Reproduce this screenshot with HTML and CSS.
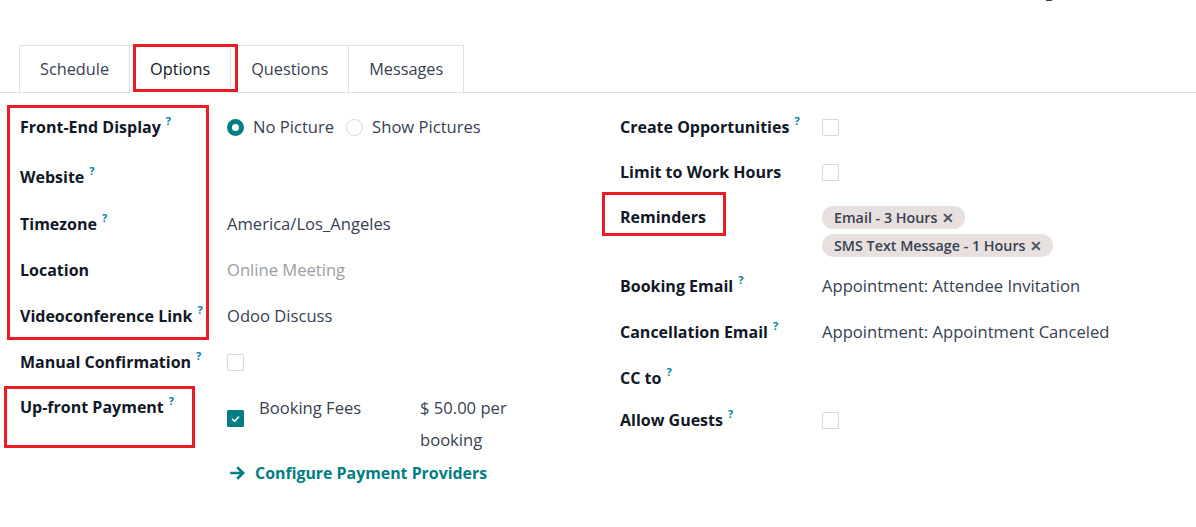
FILE: index.html
```html
<!DOCTYPE html>
<html>
<head>
<meta charset="utf-8">
<link rel="stylesheet" href="styles.css">
</head>
<body>
<div class="page">
  <div class="tabs">
    <div class="tab">Schedule</div>
    <div class="tab active">Options</div>
    <div class="tab">Questions</div>
    <div class="tab">Messages</div>
  </div>

  <div class="form">
    <div class="col">
      <div class="row r-display">
        <div class="label">Front-End Display<sup class="q">?</sup></div>
        <div class="value radios">
          <span class="radio on"></span><span class="rlabel">No Picture</span>
          <span class="radio"></span><span class="rlabel">Show Pictures</span>
        </div>
      </div>
      <div class="row r-website">
        <div class="label">Website<sup class="q">?</sup></div>
        <div class="value"></div>
      </div>
      <div class="row">
        <div class="label">Timezone<sup class="q">?</sup></div>
        <div class="value">America/Los_Angeles</div>
      </div>
      <div class="row">
        <div class="label">Location</div>
        <div class="value placeholder">Online Meeting</div>
      </div>
      <div class="row">
        <div class="label">Videoconference Link<sup class="q">?</sup></div>
        <div class="value">Odoo Discuss</div>
      </div>
      <div class="row r-manual">
        <div class="label">Manual Confirmation<sup class="q">?</sup></div>
        <div class="value"><span class="check"></span></div>
      </div>
      <div class="row r-payment">
        <div class="label">Up-front Payment<sup class="q">?</sup></div>
        <div class="value">
          <div class="fees">
            <span class="check on"><svg viewBox="0 0 16 16" width="16" height="16"><path d="M4.8 8.4 L7 10.4 L11.2 6" fill="none" stroke="#fff" stroke-width="1.8" stroke-linecap="round" stroke-linejoin="round"/></svg></span>
            <span class="fee-label">Booking Fees</span>
            <span class="fee-amount">$ 50.00 per booking</span>
          </div>
          <a class="link"><svg class="arrow" viewBox="0 0 16 14" width="16" height="14"><path d="M1.5 7 H13 M8.2 2.2 L13 7 L8.2 11.8" fill="none" stroke="#017e84" stroke-width="2.6" stroke-linecap="square" stroke-linejoin="miter"/></svg>Configure Payment Providers</a>
        </div>
      </div>
    </div>

    <div class="col right">
      <div class="row rr">
        <div class="label">Create Opportunities<sup class="q">?</sup></div>
        <div class="value"><span class="check"></span></div>
      </div>
      <div class="row rr">
        <div class="label">Limit to Work Hours</div>
        <div class="value"><span class="check"></span></div>
      </div>
      <div class="row rr r-reminders">
        <div class="label">Reminders</div>
        <div class="value tags">
          <span class="tag">Email - 3 Hours <span class="x">&#10005;</span></span>
          <span class="tag">SMS Text Message - 1 Hours <span class="x">&#10005;</span></span>
        </div>
      </div>
      <div class="row rr r-mail">
        <div class="label">Booking Email<sup class="q">?</sup></div>
        <div class="value">Appointment: Attendee Invitation</div>
      </div>
      <div class="row rr r-mail">
        <div class="label">Cancellation Email<sup class="q">?</sup></div>
        <div class="value">Appointment: Appointment Canceled</div>
      </div>
      <div class="row rr r-cc">
        <div class="label">CC to<sup class="q">?</sup></div>
        <div class="value"></div>
      </div>
      <div class="row rr">
        <div class="label">Allow Guests<sup class="q">?</sup></div>
        <div class="value"><span class="check"></span></div>
      </div>
    </div>
  </div>

  <div class="hl hl-tab"></div>
  <div class="hl hl-left"></div>
  <div class="hl hl-pay"></div>
  <div class="hl hl-rem"></div>
  <div class="topmark"></div>
</div>
</body>
</html>
```

FILE: styles.css
```css
* { box-sizing: border-box; }
html, body { margin: 0; padding: 0; background: #fff; }
body {
  font-family: "Open Sans", "Noto Sans", sans-serif;
  font-size: 16.6px;
  color: #374151;
}
.page { position: relative; width: 1196px; height: 527px; overflow: hidden; }

.tabs {
  display: flex;
  margin-top: 45px;
  padding-left: 19px;
  border-bottom: 1px solid #dee2e6;
  height: 48px;
}
.tab {
  height: 48px;
  padding: 0 20px;
  display: flex;
  align-items: center;
  border: 1px solid #dee2e6;
  border-right: none;
  margin-bottom: -1px;
  color: #374151;
  font-size: 16.3px;
}
.tab:last-child { border-right: 1px solid #dee2e6; }
.tab.active { border-bottom-color: #fff; color: #111827; }

.form {
  display: grid;
  grid-template-columns: 600px 1fr;
  padding-left: 20px;
  padding-top: 12px;
}
.row {
  display: grid;
  grid-template-columns: 207px 1fr;
  line-height: 24px;
  padding-top: 10px;
  height: 46px;
}
.right .row { grid-template-columns: 202px 1fr; height: 45px; }
.r-display { height: 50px; }
.r-website { height: 47px; }
.r-manual { height: 45px; }
.r-payment { height: auto; }
.right .r-reminders { height: 69px; }
.right .r-mail { height: 46px; }
.right .r-cc { height: 42px; }

.label {
  font-weight: 700;
  font-size: 16px;
  color: #111827;
  white-space: nowrap;
}
.q {
  color: #0180a5;
  font-size: 11px;
  font-weight: 700;
  margin-left: 5px;
  vertical-align: top;
  position: relative;
  top: -6px;
}
.value { color: #374151; }
.placeholder { color: #9a9ea5; }

.radios { display: flex; align-items: center; height: 24px; }
.radio {
  width: 17px; height: 17px;
  border-radius: 50%;
  border: 1px solid #d5d8dc;
  display: inline-block;
  margin-right: 9px;
}
.radio.on { border: 5px solid #017e84; }
.rlabel { margin-right: 12px; }

.check {
  display: inline-block;
  width: 17px; height: 17px;
  border: 1px solid #d5d8dc;
  border-radius: 1px;
  vertical-align: middle;
  margin-top: -3px;
}
.check.on {
  background: #017e84;
  border-color: #017e84;
  display: flex;
  align-items: center;
  justify-content: center;
}
.check.on svg { display: block; }

.fees {
  display: grid;
  grid-template-columns: 32px 161px 100px;
  line-height: 32px;
  margin-top: -3px;
}
.fees .check.on { margin-top: 18px; width: 17px; height: 17px; }
.link {
  display: flex;
  align-items: center;
  color: #017e84;
  font-weight: 700;
  font-size: 15.9px;
  margin-top: 5px;
  line-height: 24px;
}
.arrow { display: block; margin-left: 3px; margin-right: 9px; }

.tags { display: flex; flex-direction: column; align-items: flex-start; gap: 5px; margin-top: 1px; }
.tag {
  background: #e7e0de;
  border-radius: 12px;
  font-size: 14.3px;
  font-weight: 600;
  color: #374151;
  line-height: 23px;
  padding: 0 11px 0 12px;
  white-space: nowrap;
}
.x { font-size: 14px; font-weight: 700; color: #4b5563; margin-left: 1px; }

.hl { position: absolute; border: 3px solid #ed1c24; }
.hl-tab { left: 133px; top: 44px; width: 105px; height: 48px; }
.hl-left { left: 7px; top: 105px; width: 202px; height: 235px; }
.hl-pay { left: 4px; top: 386px; width: 191px; height: 62px; }
.hl-rem { left: 602px; top: 192px; width: 124px; height: 44px; }
.topmark { position: absolute; left: 1046px; top: 0; width: 6px; height: 1px; background: #3b3f58; }
```
